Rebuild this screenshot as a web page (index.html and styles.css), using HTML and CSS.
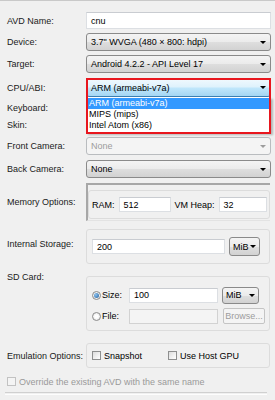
FILE: index.html
```html
<!doctype html>
<html lang="en">
  <head>
    <meta charset="UTF-8" />
    <title>Create new Android Virtual Device (AVD)</title>
    <link rel="stylesheet" href="styles.css">
  </head>
  <body>
    <div class="dialog">
      <div class="row row-name">
        <span class="label">AVD Name:</span>
        <div class="textbox">cnu</div>
      </div>
      <div class="row row-device">
        <span class="label">Device:</span>
        <div class="combo"><span>3.7" WVGA (480 × 800: hdpi)</span><i class="arrow"></i></div>
      </div>
      <div class="row row-target">
        <span class="label">Target:</span>
        <div class="combo"><span>Android 4.2.2 - API Level 17</span><i class="arrow"></i></div>
      </div>
      <div class="row row-cpu">
        <span class="label">CPU/ABI:</span>
        <div class="cpu-wrap">
          <div class="combo combo-active"><span>ARM (armeabi-v7a)</span><i class="arrow"></i></div>
          <ul class="droplist">
            <li class="selected">ARM (armeabi-v7a)</li>
            <li>MIPS (mips)</li>
            <li>Intel Atom (x86)</li>
          </ul>
          <div class="highlight"></div>
        </div>
      </div>
      <div class="row row-keyboard">
        <span class="label">Keyboard:</span>
      </div>
      <div class="row row-skin">
        <span class="label">Skin:</span>
      </div>
      <div class="row row-front">
        <span class="label">Front Camera:</span>
        <div class="combo combo-disabled"><span>None</span><i class="arrow"></i></div>
      </div>
      <div class="row row-back">
        <span class="label">Back Camera:</span>
        <div class="combo"><span>None</span><i class="arrow"></i></div>
      </div>
      <div class="row row-memory">
        <span class="label">Memory Options:</span>
        <div class="mem-frame">
          <div class="mem-group">
            <span class="inline-label">RAM:</span>
            <div class="textbox small ram">512</div>
            <span class="inline-label heap-label">VM Heap:</span>
            <div class="textbox small heap">32</div>
          </div>
        </div>
      </div>
      <div class="row row-internal">
        <span class="label">Internal Storage:</span>
        <div class="group internal">
          <div class="textbox small storage">200</div>
          <div class="unit-combo">MiB<i class="arrow"></i></div>
        </div>
      </div>
      <div class="row row-sd">
        <span class="label">SD Card:</span>
        <div class="group sd">
          <div class="sd-line">
            <span class="radio checked"></span>
            <span class="sd-label">Size:</span>
            <div class="textbox small sd-input">100</div>
            <div class="unit-combo sd-unit">MiB<i class="arrow"></i></div>
          </div>
          <div class="sd-line">
            <span class="radio"></span>
            <span class="sd-label">File:</span>
            <div class="textbox small sd-input disabled"></div>
            <div class="button disabled">Browse...</div>
          </div>
        </div>
      </div>
      <div class="row row-emulation">
        <span class="label">Emulation Options:</span>
        <div class="group emulation">
          <span class="check"></span><span class="check-text snapshot">Snapshot</span>
          <span class="check"></span><span class="check-text">Use Host GPU</span>
        </div>
      </div>
      <div class="row row-override">
        <span class="check disabled"></span>
        <span class="override-text">Override the existing AVD with the same name</span>
      </div>
      <div class="separator"></div>
    </div>
  </body>
</html>
```

FILE: styles.css
```css
body {
  margin: 0;
  height: 399px;
  overflow: hidden;
  background-color: #f0f0f0;
  border-top: 1px solid #c9c9c9;
  font-family: "Liberation Sans", Arial, sans-serif;
  font-size: 9px;
  color: #000;
}

.dialog {
  padding: 11px 4px 0 7px;
}

.row {
  display: flex;
  align-items: center;
  height: 18px;
  margin-top: 4px;
  white-space: nowrap;
}

.label {
  flex: none;
  width: 79px;
  color: #1a1a1a;
}

/* row placement */
.row-name { height: 17px; margin-top: 0; }
.row-cpu { height: 19px; margin-top: 5px; }
.row-keyboard { height: 16px; margin-top: 3px; }
.row-skin { height: 16px; margin-top: 1px; }
.row-back { margin-top: 5px; }
.row-memory { height: 38px; margin-top: 5px; }
.row-internal { height: 35px; margin-top: 8px; }
.row-internal .label { margin-top: -5px; }
.row-sd { height: 55px; margin-top: 12px; align-items: flex-start; }
.row-sd .label { margin-top: -4px; }
.row-emulation { height: 25px; margin-top: 12px; }
.row-override { height: 13px; margin-top: 7px; }

/* text boxes */
.textbox {
  flex: 1;
  height: 100%;
  box-sizing: border-box;
  background-color: #fff;
  border: 1px solid #dcdfe3;
  border-top-color: #c9ccd1;
  padding-left: 4px;
  display: flex;
  align-items: center;
}

.textbox.small {
  flex: none;
  height: 15px;
}

.textbox.disabled {
  background-color: #f4f4f4;
  border-color: #d2d2d2;
}

/* combo boxes */
.combo {
  flex: 1;
  height: 100%;
  box-sizing: border-box;
  display: flex;
  align-items: center;
  justify-content: space-between;
  padding: 0 4px 0 4px;
  border: 1px solid #8a8a8a;
  border-radius: 3px;
  background: linear-gradient(#f4f4f4 0%, #ebebeb 50%, #dedede 51%, #d2d2d2 100%);
}

.arrow {
  flex: none;
  width: 0;
  height: 0;
  border-left: 3px solid transparent;
  border-right: 3px solid transparent;
  border-top: 3px solid #000;
}

.combo-active {
  border-color: #3c7fb1;
  background: linear-gradient(#f1f9fe 0%, #dff2fc 45%, #bfe6fb 55%, #a4d6f3 100%);
}

.combo-disabled {
  color: #9c9c9c;
  border-color: #b9bcbf;
  background: #f4f4f4;
}

.combo-disabled .arrow {
  border-top-color: #9c9c9c;
}

/* open drop-down */
.cpu-wrap {
  flex: 1;
  height: 100%;
  position: relative;
  display: flex;
}

.droplist {
  position: absolute;
  top: 19px;
  left: 0;
  right: 0;
  margin: 0;
  padding: 1px 2px 2px 2px;
  list-style: none;
  background-color: #fff;
  box-shadow: 2px 2px 2px rgba(0, 0, 0, 0.25);
}

.droplist li {
  height: 11px;
  line-height: 11px;
  padding-left: 1px;
}

.droplist li.selected {
  background-color: #3399ff;
  color: #fff;
}

.highlight {
  position: absolute;
  top: 0;
  left: 0;
  right: 0;
  height: 56px;
  box-sizing: border-box;
  border: 2px solid #e8161e;
}

/* group boxes */
.mem-frame {
  flex: 1;
  height: 100%;
  box-sizing: border-box;
  margin-right: 1px;
  padding: 5px 0 1px 0;
  border-top: 2px solid #a7a7a7;
  border-left: 2px solid #a7a7a7;
  border-bottom: 1px solid #e3e3e3;
}

.mem-group {
  height: 100%;
  box-sizing: border-box;
  border: 1px solid #dcdcdc;
  border-radius: 3px;
  display: flex;
  align-items: center;
  padding-left: 3px;
}

.inline-label {
  margin-right: 4px;
}

.ram { width: 52px; }
.heap-label { margin-left: 4px; }
.heap { width: 48px; }

.group {
  flex: 1;
  height: 100%;
  box-sizing: border-box;
  margin-right: 1px;
  border: 1px solid #dcdcdc;
  border-radius: 3px;
  display: flex;
  align-items: center;
  padding-left: 5px;
}

.storage { width: 133px; }

.unit-combo {
  flex: none;
  width: 31px;
  height: 19px;
  box-sizing: border-box;
  margin-left: 4px;
  padding: 0 3px 0 3px;
  display: flex;
  align-items: center;
  justify-content: space-between;
  border: 1px solid #8a8a8a;
  border-radius: 3px;
  background: linear-gradient(#f4f4f4 0%, #ebebeb 50%, #dedede 51%, #d2d2d2 100%);
}

.group.sd {
  flex-direction: column;
  align-items: stretch;
  justify-content: flex-start;
  padding-top: 9px;
}

.sd-line {
  display: flex;
  align-items: center;
  height: 18px;
  margin-bottom: 3px;
}

.radio {
  flex: none;
  width: 9px;
  height: 9px;
  box-sizing: border-box;
  border: 1px solid #8c8c8c;
  border-radius: 50%;
  background: radial-gradient(#ffffff 30%, #dcdcdc 100%);
  position: relative;
}

.radio.checked::after {
  content: "";
  position: absolute;
  left: 1px;
  top: 1px;
  width: 5px;
  height: 5px;
  border-radius: 50%;
  background: radial-gradient(circle at 35% 35%, #8fc4f0, #1f5d9c);
}

.sd-label {
  width: 27px;
  margin-left: 1px;
}

.sd-input { width: 89px; }
.sd-unit { width: 37px; height: 17px; }

.button {
  flex: none;
  width: 42px;
  height: 16px;
  box-sizing: border-box;
  margin-left: 5px;
  display: flex;
  align-items: center;
  justify-content: center;
  border: 1px solid #c4c4c4;
  border-radius: 2px;
  background-color: #f4f4f4;
}

.button.disabled {
  color: #9c9c9c;
}

.check {
  flex: none;
  width: 9px;
  height: 9px;
  box-sizing: border-box;
  border: 1px solid #8e8f8f;
  background: linear-gradient(135deg, #dcdcdc, #ffffff);
}

.check.disabled {
  border-color: #c2c2c2;
  background: #f4f4f4;
}

.check-text {
  margin-left: 3px;
}

.snapshot {
  margin-right: 26px;
}

.override-text {
  margin-left: 3px;
  color: #9a9a9a;
}

.separator {
  margin: 4px 4px 0 -2px;
  height: 1px;
  border-top: 1px solid #d0d0d0;
  border-bottom: 1px solid #fdfdfd;
}
```
